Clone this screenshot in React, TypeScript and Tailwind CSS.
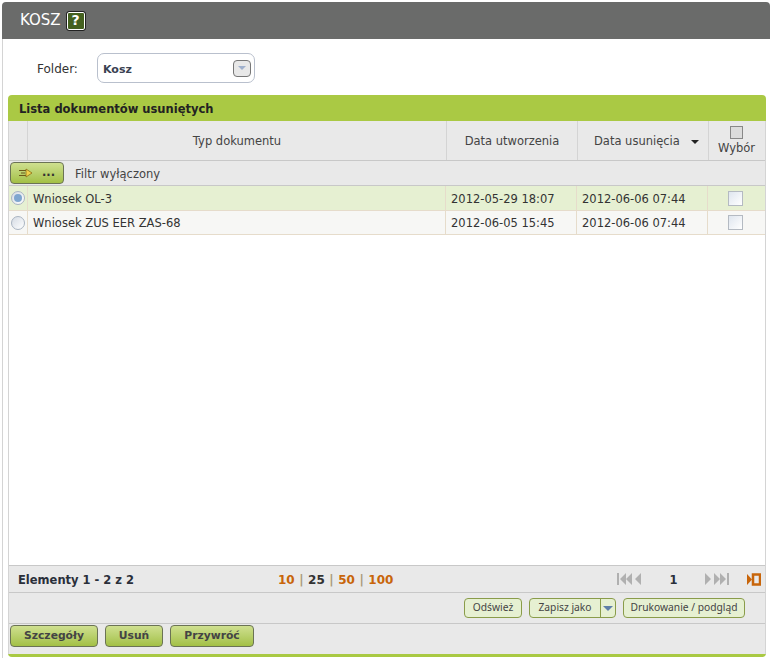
import { ChevronDown } from "lucide-react";

const font = "font-['DejaVu_Sans',sans-serif]";
const small = "font-['Noto_Sans',sans-serif]";

function Radio({ on }: { on?: boolean }) {
  return (
    <span className="flex h-[14px] w-[14px] items-center justify-center rounded-full border border-[#a9b4c2] bg-gradient-to-br from-[#d5dbe4] to-white">
      {on && <span className="h-[8px] w-[8px] rounded-full bg-[#7fa6cf]" />}
    </span>
  );
}

function Check() {
  return <span className="block h-[15px] w-[15px] border border-[#b4bac2] bg-gradient-to-br from-[#dfe6ef] to-white" />;
}

function Row({ name, made, removed, on }: { name: string; made: string; removed: string; on?: boolean }) {
  const cell = `flex h-full items-center border-l border-[#e6dccb] pl-[5px] ${on ? "pt-[3px]" : "pt-[2px]"}`;
  return (
    <div className="flex border-b border-[#e6dccb] text-[11.5px] text-[#333]">
      <div className={`flex w-[763px] shrink-0 items-center ${on ? "h-[24px] bg-[#e6f0d2]" : "h-[23px] bg-[#f7f7f5]"}`}>
        <div className="flex h-full w-[18px] items-center justify-center"><Radio on={on} /></div>
        <div className={`${cell} w-[418px]`}>{name}</div>
        <div className={`${cell} w-[131px]`}>{made}</div>
        <div className={`${cell} w-[131px]`}>{removed}</div>
        <div className="flex h-full w-[56px] items-center justify-center border-l border-[#e6dccb]"><Check /></div>
      </div>
    </div>
  );
}

function GreenButton({ label, w }: { label: string; w: string }) {
  return (
    <button className={`h-[22px] ${w} rounded-[4px] border border-[#6b7355] bg-gradient-to-b from-[#cfe08f] to-[#a3c044] text-[10.75px] font-bold text-[#444]`}>
      {label}
    </button>
  );
}

function SmallButton({ label, w }: { label: string; w: string }) {
  return (
    <button className={`${small} h-[20px] ${w} whitespace-nowrap rounded-[4px] border border-[#8a9c4a] bg-[#e6f0d2] text-[10.25px] text-[#444]`}>
      {label}
    </button>
  );
}

export default function App() {
  return (
    <div className={`${font} h-[658px] w-[770px] overflow-hidden bg-white pt-[2px] pl-[2px] text-[11.5px]`}>
      <div className="flex h-[37px] w-[768px] items-center rounded-t-[4px] bg-[#6a6b6a] pl-[18px]">
        <span className="text-[15px] text-white">KOSZ</span>
        <span className="ml-[6px] flex h-[18px] w-[18px] items-center justify-center rounded-[2px] border border-white bg-[#44611f] text-[14px] font-bold text-white outline outline-1 outline-[#222]">?</span>
      </div>

      <div className="h-[619px] w-[768px] border-l border-[#d4d4d4] pl-[5px]">
        <div className="flex h-[56px] items-center pl-[29px] pt-[2px]">
          <span className="w-[60px] pt-[2px] text-[12px] text-[#333]">Folder:</span>
          <div className="flex h-[30px] w-[158px] items-center justify-between rounded-[7px] border border-[#b9c0cd] pl-[5px] pr-[3px]">
            <span className="pt-[4px] text-[11px] font-bold text-[#3a4252]">Kosz</span>
            <span className="flex h-[17px] w-[18px] items-center justify-center rounded-[4px] border border-[#777] bg-[#e8e8e8]">
              <span className="h-0 w-0 border-x-[4px] border-t-[4px] border-x-transparent border-t-[#9fb0cc]" />
            </span>
          </div>
        </div>

        <div className="flex h-[562px] w-[758px] flex-col rounded-[4px] border-b-[3px] border-[#a9c943]">
          <div className="flex h-[26px] shrink-0 items-center rounded-t-[4px] bg-[#aac944] pl-[11px] pt-[4px] text-[11.5px] font-bold text-[#222]">
            Lista dokumentów usuniętych
          </div>
          <div className="flex min-h-0 flex-1 flex-col overflow-hidden border-x border-[#d4d4d4]">
            <div className="flex h-[40px] shrink-0 border-b border-[#c8c8c8] bg-[#e9e9e9] text-[#444]">
              <div className="w-[18px]" />
              <div className="flex w-[419px] items-center justify-center border-l border-[#d4d4d4] pt-[3px]">Typ dokumentu</div>
              <div className="flex w-[131px] items-center justify-center border-l border-[#d4d4d4] pt-[3px]">Data utworzenia</div>
              <div className="flex w-[131px] items-center justify-between border-l border-[#d4d4d4] pl-[16px] pr-[9px] pt-[3px]">
                <span>Data usunięcia</span>
                <span className="h-0 w-0 border-x-[4px] border-t-[4px] border-x-transparent border-t-[#222]" />
              </div>
              <div className="flex w-[56px] flex-col items-center justify-center border-l border-[#d4d4d4]">
                <span className="block h-[13px] w-[13px] border border-[#888] bg-[#dcdcdc]" />
                <span className="mt-[1px] leading-[16px]">Wybór</span>
              </div>
            </div>

            <div className="flex h-[25px] shrink-0 items-center border-b border-[#c8c8c8] bg-[#e9e9e9] pl-[1px] text-[#444]">
              <button className="flex h-[22px] w-[54px] items-center justify-center gap-[9px] rounded-[4px] border border-[#6b7355] bg-gradient-to-b from-[#cfe08f] to-[#a3c044] text-[#333]">
                <svg width="14" height="10" viewBox="0 0 14 10" fill="none">
                  <path d="M0 2.500h7M2 5h4M0 7.500h7" stroke="#6b5a1a" strokeWidth="1" />
                  <path d="M7 1l6 4-6 4z" fill="#f2d24a" stroke="#8a6d1a" strokeWidth="0.8" />
                </svg>
                <span className="font-bold leading-none">...</span>
              </button>
              <span className="ml-[11px] pt-[4px]">Filtr wyłączony</span>
            </div>

            <Row on name="Wniosek OL-3" made="2012-05-29 18:07" removed="2012-06-06 07:44" />
            <Row name="Wniosek ZUS EER ZAS-68" made="2012-06-05 15:45" removed="2012-06-06 07:44" />
            <div className="min-h-0 flex-1 bg-white" />

            <div className="flex h-[28px] shrink-0 items-center border-y border-[#c8c8c8] bg-[#e9e9e9] pl-[9px] font-bold">
              <span className="w-[260px] pt-[4px] text-[#2a2f3a]">Elementy 1 - 2 z 2</span>
              <span className="flex w-[339px] gap-[4.5px] pt-[1px] text-[12px] text-[#c8650a]">
                <span>10</span><span className="text-[#a89878]">|</span><span className="text-[#333]">25</span><span className="text-[#a89878]">|</span><span>50</span><span className="text-[#a89878]">|</span><span>100</span>
              </span>
              <div className="flex items-center">
                <svg width="25" height="14" viewBox="0 0 25 14" fill="#b0b0b0"><path d="M0 1h2v12H0zM9 1v12L3 7zM15 1v12L9 7zM24 1v12l-6-6z" /></svg>
                <span className="w-[63px] pt-[4px] text-center text-[#2a2f3a]">1</span>
                <svg width="25" height="14" viewBox="0 0 25 14" fill="#b0b0b0"><path d="M0 1v12l6-6zM9 1v12l6-6zM15 1v12l6-6zM22 1h2v12h-2z" /></svg>
                <svg className="ml-[17px]" width="14" height="13" viewBox="0 0 14 13"><path d="M0 1v11l5-5.500z" fill="#c8650a" /><rect x="6" y="1.500" width="7" height="10" fill="none" stroke="#c8650a" strokeWidth="2.500" /></svg>
              </div>
            </div>

            <div className="flex h-[31px] shrink-0 items-center justify-end gap-[7px] border-b border-[#c8c8c8] bg-[#e9e9e9] pr-[20px]">
              <SmallButton label="Odśwież" w="w-[58px]" />
              <div className={`${small} flex h-[20px] w-[87px] rounded-[4px] border border-[#8a9c4a] bg-[#e6f0d2] text-[10.25px] text-[#444]`}>
                <span className="flex w-[70px] items-center justify-center">Zapisz jako</span>
                <span className="flex flex-1 items-center justify-center border-l border-[#8a9c4a]">
                  <span className="h-0 w-0 border-x-[5px] border-t-[5px] border-x-transparent border-t-[#5f7fa8]" />
                </span>
              </div>
              <SmallButton label="Drukowanie / podgląd" w="w-[122px]" />
            </div>

            <div className="flex h-[30px] shrink-0 items-start gap-[7px] bg-[#e9e9e9] pl-[1px] pt-[1px]">
              <GreenButton label="Szczegóły" w="w-[88px]" />
              <GreenButton label="Usuń" w="w-[58px]" />
              <GreenButton label="Przywróć" w="w-[84px]" />
            </div>
          </div>
        </div>
      </div>
    </div>
  );
}
